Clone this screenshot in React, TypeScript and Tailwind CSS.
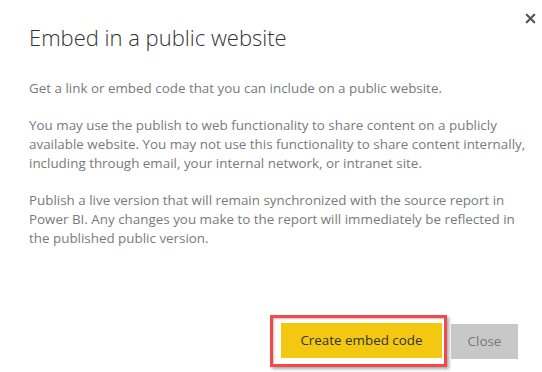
import { X } from 'lucide-react';

const paragraphs = [
  'Get a link or embed code that you can include on a public website.',
  'You may use the publish to web functionality to share content on a publicly available website. You may not use this functionality to share content internally, including through email, your internal network, or intranet site.',
  'Publish a live version that will remain synchronized with the source report in Power BI. Any changes you make to the report will immediately be reflected in the published public version.',
];

export default function App() {
  return (
    <div
      className="relative w-[542px] h-[372px] bg-white overflow-hidden"
      style={{ fontFamily: '"Open Sans", "Noto Sans", sans-serif' }}
    >
      <button
        type="button"
        aria-label="Close dialog"
        className="absolute top-[9px] right-[2px] text-[#555] p-0.5"
      >
        <X size={15} strokeWidth={3.5} />
      </button>

      <div className="flex flex-col h-full pl-[29px] pr-[24px]">
        <h1 className="mt-[22px] text-[22px] font-light leading-[30px] text-[#333]">
          Embed in a public website
        </h1>

        <div className="mt-[27px] flex flex-col gap-[18px] w-[502px]">
          {paragraphs.map((p) => (
            <p key={p} className="text-[13.4px] leading-[19px] text-[#7a7a7a]">
              {p}
            </p>
          ))}
        </div>

        <div className="mt-auto mb-[5px] flex items-center justify-end gap-[4px]">
          <div className="border-[3px] border-[#f04a4a] shadow-[2px_2px_3px_rgba(0,0,0,0.35),inset_1px_1px_2px_rgba(0,0,0,0.25)] pl-[8px] pr-[2px] pt-[5px] pb-[6px]">
            <button
              type="button"
              className="w-[161px] h-[35px] bg-[#f2c811] text-[13.4px] text-[#333]"
            >
              Create embed code
            </button>
          </div>
          <button
            type="button"
            className="w-[67px] h-[35px] bg-[#c8c8c8] text-[13.4px] text-[#777]"
          >
            Close
          </button>
        </div>
      </div>
    </div>
  );
}
